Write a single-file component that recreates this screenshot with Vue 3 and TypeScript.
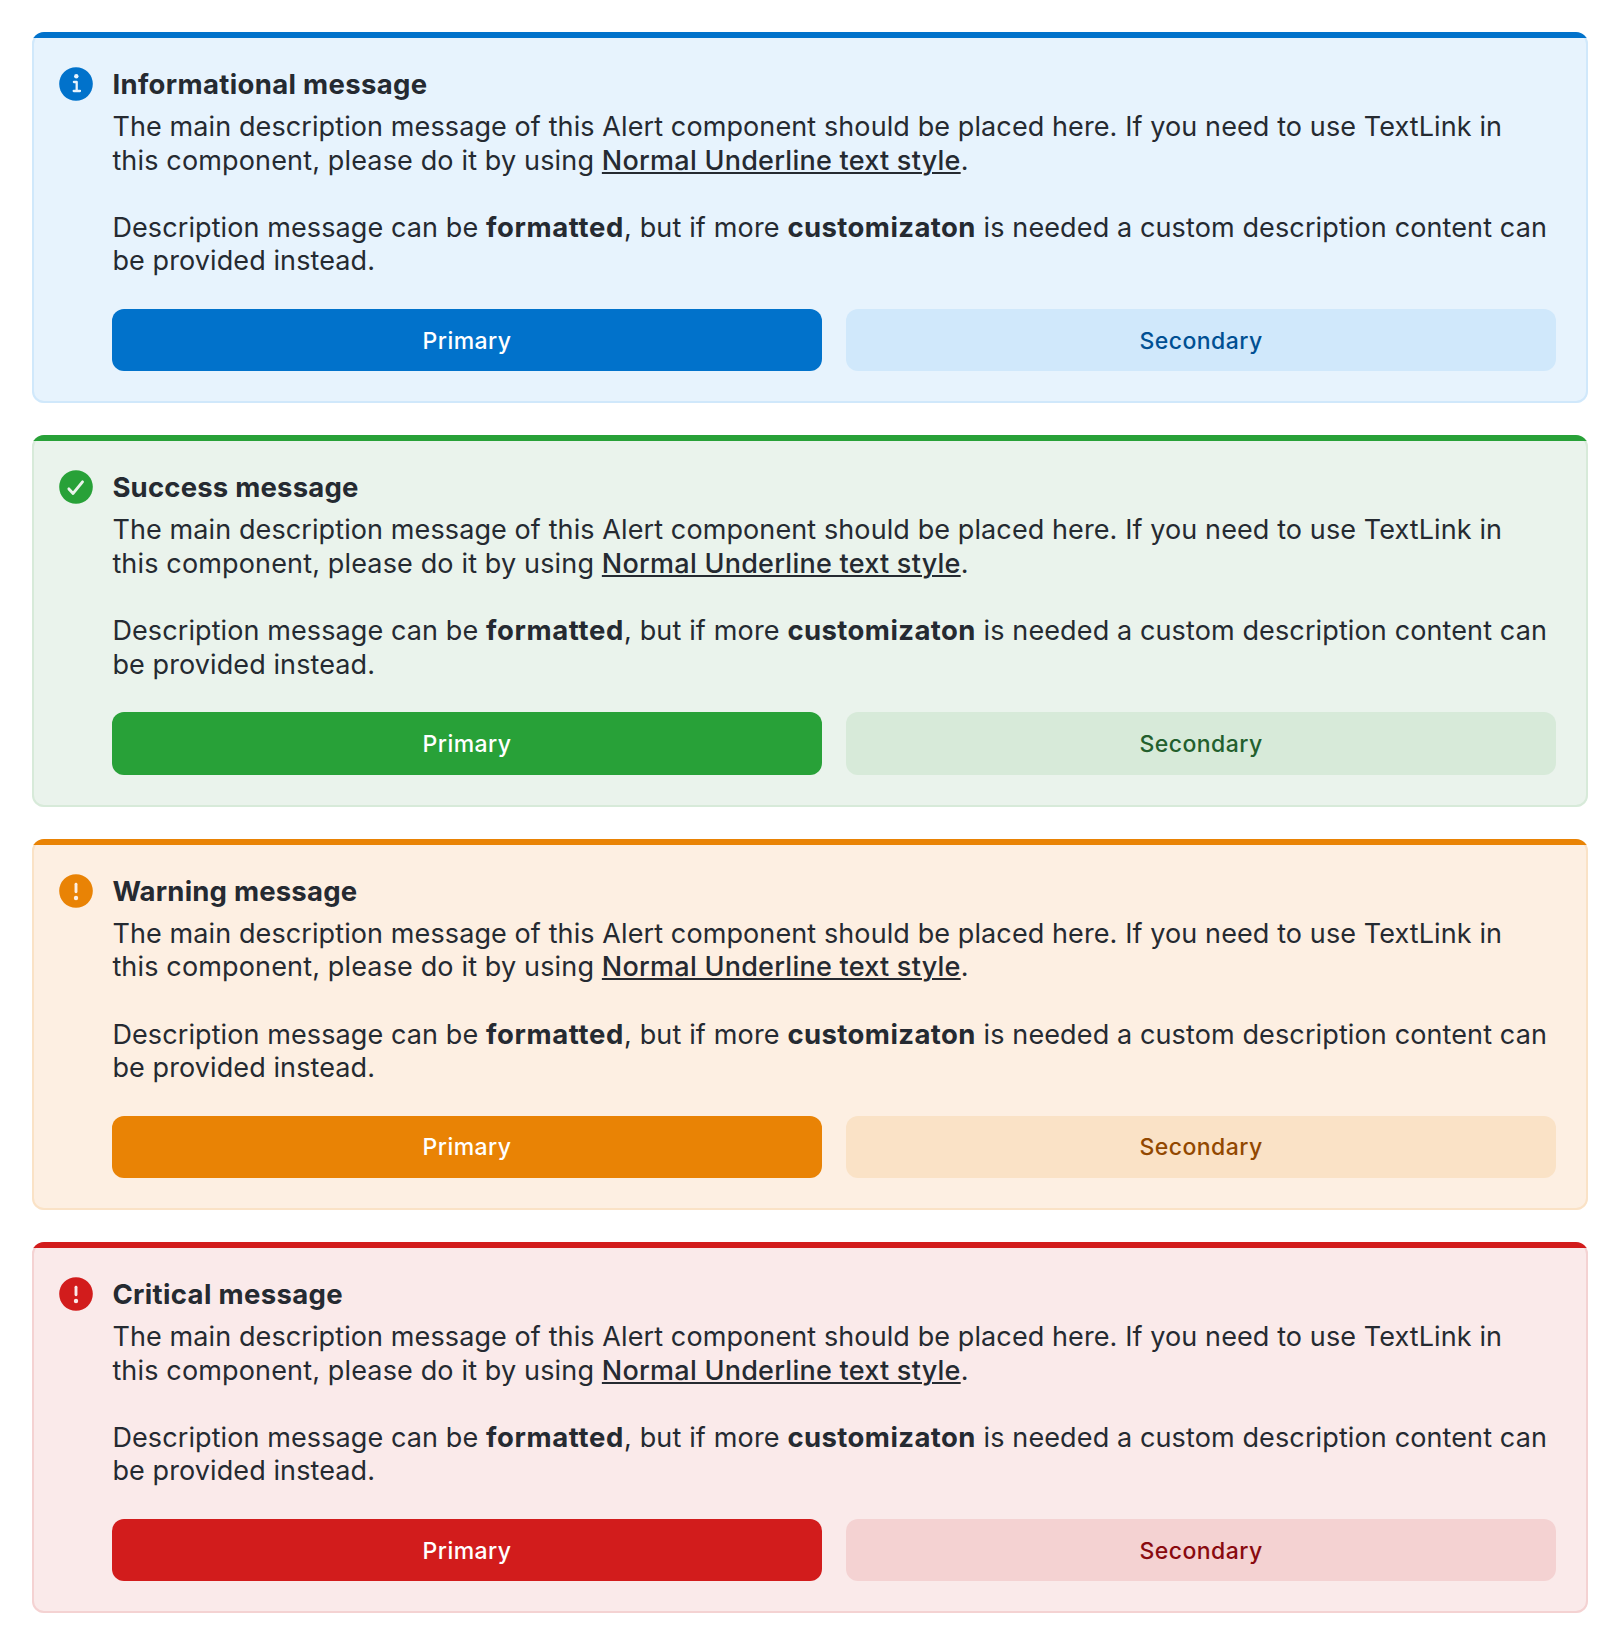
<script setup lang="ts">
type Kind = 'info' | 'success' | 'warning' | 'critical'

interface Alert {
  kind: Kind
  title: string
}

const alerts: Alert[] = [
  { kind: 'info', title: 'Informational message' },
  { kind: 'success', title: 'Success message' },
  { kind: 'warning', title: 'Warning message' },
  { kind: 'critical', title: 'Critical message' },
]
</script>

<template>
  <main class="stack">
    <section v-for="alert in alerts" :key="alert.kind" class="alert" :class="alert.kind">
      <svg class="icon" viewBox="0 0 40 40" aria-hidden="true">
        <circle class="disc" cx="20" cy="20" r="16.8" />
        <template v-if="alert.kind === 'info'">
          <circle class="dot" cx="20.3" cy="12.2" r="2.2" />
          <path class="mark thin" d="M17.9 18h2.8v9M17.7 27h6.3" />
        </template>
        <path v-else-if="alert.kind === 'success'" class="mark" d="M12.9 21.9l4.2 4.5 9.4-11.6" />
        <template v-else>
          <path class="mark" d="M20 13.3v7.5" />
          <circle class="dot" cx="20" cy="27" r="2.2" />
        </template>
      </svg>
      <div class="content">
        <h2 class="title">{{ alert.title }}</h2>
        <div class="description">
          <p>
            The main description message of this Alert component should be placed here. If you need to use TextLink in<br />
            <span class="loose">this component, please do it by using </span><a class="link">Normal Underline text style</a>.
          </p>
          <p>
            Description message can be <b class="first">formatted</b><span class="loose">, but if more </span><b>customizaton</b><span class="tail"> is needed a custom description content can</span><br />
            be provided instead.
          </p>
        </div>
        <div class="actions">
          <button type="button" class="button primary">Primary</button>
          <button type="button" class="button secondary">Secondary</button>
        </div>
      </div>
    </section>
  </main>
</template>

<style>
body {
  margin: 0;
  background: #fff;
}
</style>

<style scoped>
.stack {
  display: flex;
  flex-direction: column;
  gap: 32px;
  padding: 32px;
  font-family: Inter, "Noto Sans", sans-serif;
  color: #252a31;
}

.alert {
  position: relative;
  box-sizing: border-box;
  display: flex;
  gap: 16px;
  height: 371.33px;
  padding: 32px 32px 32px 24px;
  overflow: hidden;
  border-radius: 12px;
  background: var(--surface);
  box-shadow: inset 0 0 0 2px var(--tint);
}

.alert::before {
  content: "";
  position: absolute;
  inset: 0 0 auto;
  height: 6px;
  background: var(--accent);
}

.info {
  --accent: #0172cb;
  --surface: #e7f3fd;
  --tint: #d0e8fb;
  --deep: #005093;
}

.success {
  --accent: #28a138;
  --surface: #eaf3ec;
  --tint: #d7ead9;
  --deep: #235f2d;
}

.warning {
  --accent: #e98305;
  --surface: #fdefe2;
  --tint: #fae2c6;
  --deep: #924800;
}

.critical {
  --accent: #d21c1c;
  --surface: #faeaea;
  --tint: #f4d2d2;
  --deep: #890a0f;
}

.icon {
  flex: none;
  width: 40px;
  height: 40px;
}

.disc {
  fill: var(--accent);
}

.dot {
  fill: var(--surface);
}

.mark {
  fill: none;
  stroke: var(--surface);
  stroke-width: 2.9;
  stroke-linecap: round;
  stroke-linejoin: round;
}

.thin {
  stroke-width: 2.3;
}

.content {
  flex: 1;
  display: flex;
  flex-direction: column;
}

.title {
  margin: 3.9px 0 8.6px 0.4px;
  font-size: 27.5px;
  font-weight: 700;
  line-height: 33.6px;
  letter-spacing: 0.34px;
}

.success .title,
.warning .title {
  letter-spacing: 0.2px;
}

.description {
  margin-left: 0.4px;
  font-size: 27px;
  line-height: 33.6px;
  letter-spacing: 0.1px;
  white-space: nowrap;
}

.description p {
  margin: 0;
}

.description p + p {
  margin-top: 33.6px;
}

.description b {
  font-size: 27.5px;
  font-weight: 700;
  line-height: 0;
  letter-spacing: 0.42px;
}

.description .first {
  letter-spacing: 0.63px;
}

.loose {
  letter-spacing: 0.15px;
}

.tail {
  letter-spacing: 0.12px;
}

.link {
  font-weight: 500;
  letter-spacing: 0.25px;
  text-decoration: underline;
  text-decoration-thickness: 2px;
  text-underline-offset: 2px;
}

.actions {
  display: flex;
  gap: 24px;
  margin-top: auto;
}

.button {
  flex: 1;
  height: 62.4px;
  padding: 1.2px 0 0;
  border: 0;
  border-radius: 12px;
  font: 500 23px/30px Inter, "Noto Sans", sans-serif;
  letter-spacing: 0.45px;
}

.primary {
  background: var(--accent);
  color: #fff;
}

.secondary {
  background: var(--tint);
  color: var(--deep);
}
</style>
